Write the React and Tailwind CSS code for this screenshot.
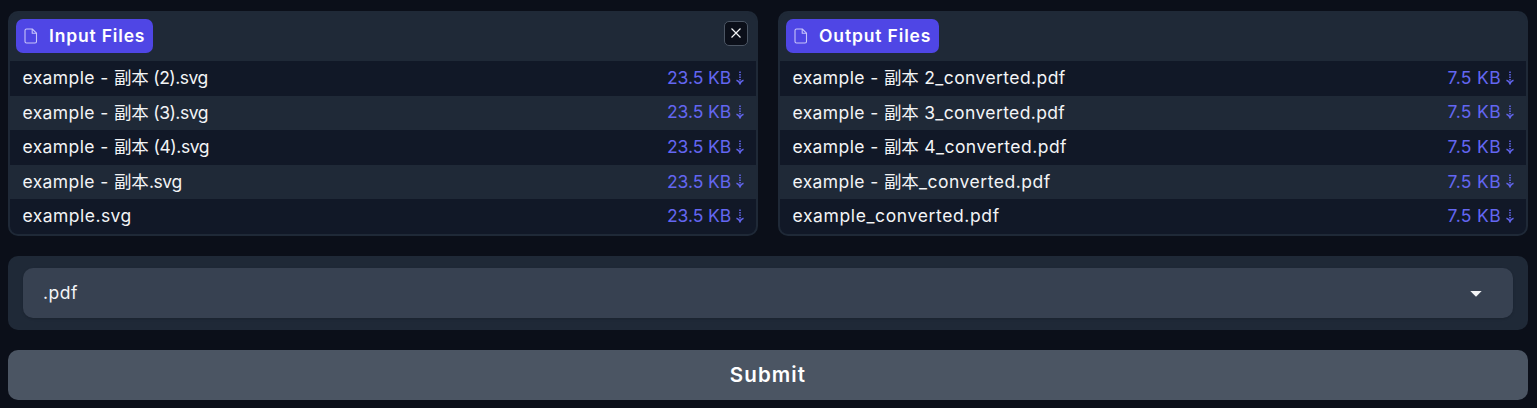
const inputFiles = [
  { stem: "example - ", cjk: "副本", rest: " (2).svg", spacing: "tracking-[-0.5px]" },
  { stem: "example - ", cjk: "副本", rest: " (3).svg", spacing: "tracking-[-0.5px]" },
  { stem: "example - ", cjk: "副本", rest: " (4).svg", spacing: "tracking-[-0.4px]" },
  { stem: "example - ", cjk: "副本", rest: ".svg", spacing: "tracking-[-0.4px]" },
  { stem: "example.svg" },
];

const outputFiles = [
  { stem: "example - ", cjk: "副本", rest: " 2_converted.pdf", spacing: "tracking-[0.42px]" },
  { stem: "example - ", cjk: "副本", rest: " 3_converted.pdf", spacing: "tracking-[0.38px]" },
  { stem: "example - ", cjk: "副本", rest: " 4_converted.pdf", spacing: "tracking-[0.46px]" },
  { stem: "example - ", cjk: "副本", rest: "_converted.pdf", spacing: "tracking-[0.53px]" },
  { stem: "example_converted.pdf" },
];

function FileIcon() {
  return (
    <svg width="14" height="16" viewBox="0 0 14 16" fill="none" stroke="#c7c4fa" strokeWidth="1.1" strokeLinejoin="round">
      <path d="M2.5 1H8.2L12.5 5.2V13.5Q12.5 15 11 15H2.5Q1 15 1 13.5V2.5Q1 1 2.5 1Z" />
      <path d="M8.2 1V5.2H12.5" />
    </svg>
  );
}

function DownArrow() {
  return (
    <svg width="8" height="14" viewBox="0 0 8 14" fill="none" stroke="#6366f1" strokeWidth="1.5">
      <path d="M4 0.5V12" strokeDasharray="1.6 0.9" />
      <path d="M0.5 9.3Q3 10.2 4 12.6Q5 10.2 7.5 9.3" />
    </svg>
  );
}

function FilePanel({ title, files, size, closable }) {
  return (
    <section className="h-[225px] min-w-0 flex-1 overflow-hidden rounded-[10px] border-2 border-[#1f2937] bg-[#1f2937]">
      <header className="flex h-12 items-start justify-between pt-1.5 pr-2 pl-1.5">
        <h2 className="flex h-[34px] items-center gap-[11px] rounded-[7px] bg-[#4f46e5] pr-[7px] pl-[8px] text-[17.5px] leading-none font-semibold text-white">
          <FileIcon />
          <span className={closable ? "w-[96.5px] tracking-[0.83px] whitespace-nowrap" : "w-[112.5px] tracking-[0.86px] whitespace-nowrap"}>{title}</span>
        </h2>
        {closable && (
          <button aria-label="Clear" className="mt-[2px] flex h-[25px] w-6 items-center justify-center rounded-[5px] border border-[#4b5563] bg-[#0b0f19]">
            <svg width="10" height="10" viewBox="0 0 10 10" stroke="#f3f4f6" strokeWidth="1.2" className="mb-[1px]">
              <path d="M0.5 0.5L9.5 9.5M9.5 0.5L0.5 9.5" />
            </svg>
          </button>
        )}
      </header>
      <ul>
        {files.map((file, i) => (
          <li key={i} className="flex h-[34.6px] items-center justify-between pr-3 pb-[1.5px] pl-[12.5px] text-[17.5px] leading-none whitespace-pre text-[#f3f4f6] odd:bg-[#111827]">
            <span>
              <span className={file.cjk ? "tracking-[0.38px]" : closable ? "tracking-[0.46px]" : "tracking-[0.62px]"}>{file.stem}</span>
              {file.cjk && <span className="font-['Noto_Sans_CJK_SC',sans-serif] font-normal">{file.cjk}</span>}
              {file.rest && <span className={file.spacing}>{file.rest}</span>}
            </span>
            <span className="flex items-center gap-[5px] text-[#6366f1]">
              <span className={closable ? "tracking-[-0.1px]" : "tracking-[0.35px]"}>{size}</span>
              <DownArrow />
            </span>
          </li>
        ))}
      </ul>
    </section>
  );
}

export default function App() {
  return (
    <main className="flex h-[408px] flex-col gap-5 bg-[#0b0f19] pt-[11px] pr-[9px] pl-2 font-['Inter','Noto_Sans_CJK_SC',sans-serif]">
      <div className="flex gap-5">
        <FilePanel title="Input Files" files={inputFiles} size="23.5 KB" closable />
        <FilePanel title="Output Files" files={outputFiles} size="7.5 KB" />
      </div>
      <div className="h-[74px] rounded-[10px] bg-[#1f2937] px-[15px] py-3">
        <div className="flex h-[50px] items-center justify-between rounded-[10px] bg-[#374151] pr-[31px] pl-5 text-[17.5px] text-[#f3f4f6] shadow-sm">
          <span className="tracking-[0.5px]">.pdf</span>
          <svg width="12" height="6" viewBox="0 0 12 6" fill="#f3f4f6" className="mt-[2px]">
            <path d="M0.3 0H11.7L6 5.8Z" />
          </svg>
        </div>
      </div>
      <button className="h-[50px] rounded-[10px] bg-[#4b5563] text-[20.5px] font-semibold tracking-[1.1px] text-white">Submit</button>
    </main>
  );
}
